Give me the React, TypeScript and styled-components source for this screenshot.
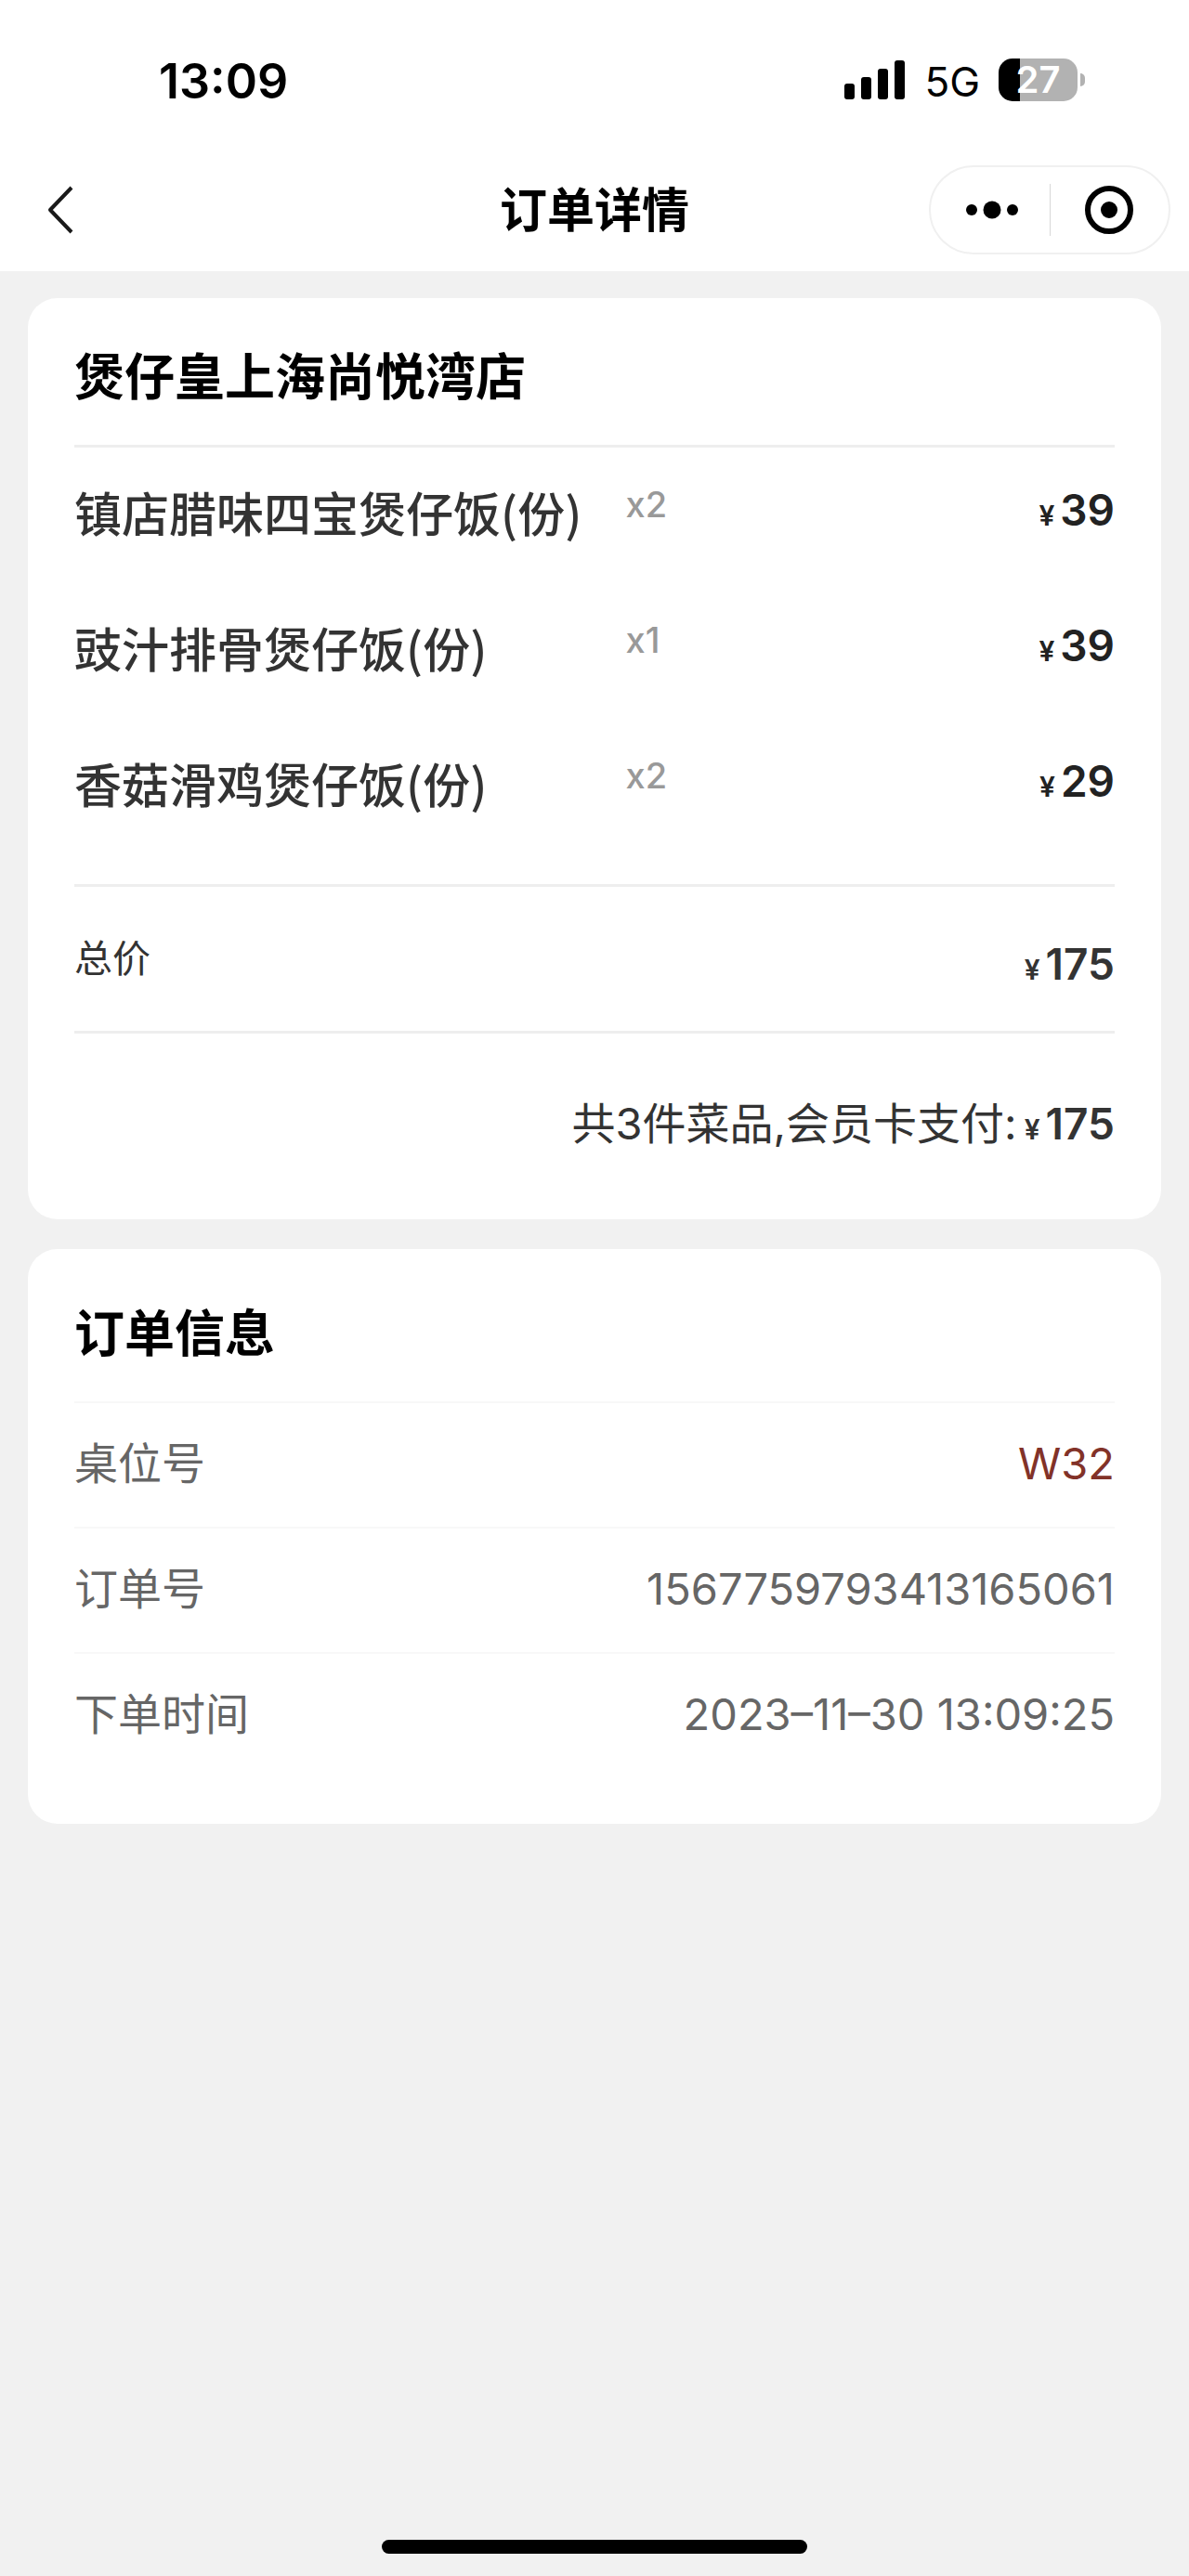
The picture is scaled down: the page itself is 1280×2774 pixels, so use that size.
import React from "react";
import styled, { createGlobalStyle } from "styled-components";

const GlobalStyle = createGlobalStyle`
  *, *::before, *::after { box-sizing: border-box; }
  body {
    margin: 0;
    background: #f1f1f1;
    font-family: Inter, "Noto Sans CJK SC", sans-serif;
    color: #333;
  }
  h1, h2, p, ul, dl, dd { margin: 0; padding: 0; }
  button { border: 0; padding: 0; background: none; color: inherit; font: inherit; cursor: pointer; }
`;

const Page = styled.div`
  display: flex;
  flex-direction: column;
  min-height: 100vh;
`;

const Header = styled.header`
  background: #fff;
`;

const StatusBar = styled.div`
  display: flex;
  align-items: center;
  justify-content: space-between;
  height: 160px;
  padding: 12px 112px 0 171px;
  color: #000;
`;

const Clock = styled.time`
  padding-top: 4px;
  font-size: 52px;
  font-weight: 600;
  line-height: 64px;
`;

const StatusIcons = styled.div`
  display: flex;
  align-items: center;
  gap: 20px;
`;

const Network = styled.span`
  font-size: 44px;
  line-height: 52px;
  padding-top: 4px;
`;

const Battery = styled.div`
  display: flex;
  align-items: center;
  gap: 3px;
`;

const BatteryBody = styled.div`
  display: flex;
  align-items: center;
  justify-content: center;
  width: 85px;
  height: 46px;
  border-radius: 15px;
  background: linear-gradient(to right, #000 27%, #b2b2b2 27%);
  color: #fff;
  font-size: 40px;
  font-weight: 600;
  line-height: 46px;
`;

const BatteryTip = styled.div`
  width: 5px;
  height: 14px;
  border-radius: 0 5px 5px 0;
  background: #b2b2b2;
`;

const NavBar = styled.nav`
  display: grid;
  grid-template-columns: 1fr auto 1fr;
  align-items: center;
  height: 132px;
  padding: 0 20px;
`;

const BackButton = styled.button`
  display: flex;
  align-items: center;
  justify-content: center;
  width: 90px;
  height: 90px;
`;

const PageTitle = styled.h1`
  padding-top: 2px;
  color: #000;
  font-size: 51px;
  font-weight: 700;
  line-height: 72px;
`;

const Capsule = styled.div`
  display: flex;
  align-items: center;
  justify-self: end;
  height: 96px;
  border: 2px solid #f0f0f0;
  border-radius: 48px;
  color: #000;
`;

const CapsuleButton = styled.button`
  display: flex;
  align-items: center;
  justify-content: center;
  width: 128px;
  height: 92px;

  & + & {
    background: linear-gradient(#d8d8d8, #d8d8d8) left center / 1px 56px no-repeat;
  }
`;

const Content = styled.main`
  display: flex;
  flex: 1;
  flex-direction: column;
  gap: 32px;
  padding: 29px 30px;
`;

const Card = styled.section`
  padding: 0 50px;
  border-radius: 32px;
  background: #fff;
`;

const CardTitle = styled.h2<{ $tall?: boolean }>`
  padding: ${(p) => (p.$tall ? "56px 0 36px" : "50px 0 36px")};
  color: #000;
  font-size: 54px;
  font-weight: 700;
  line-height: 72px;
`;

const DishList = styled.ul`
  list-style: none;
  border: solid #eee;
  border-width: 3px 0;

  && { padding-bottom: 32px; }
`;

const Dish = styled.li`
  display: flex;
  align-items: flex-start;
  min-height: 146px;
  padding: 35px 0;
`;

const DishName = styled.span`
  flex: 0 0 53%;
  font-family: "Noto Sans CJK SC", sans-serif;
  font-size: 51px;
  font-weight: 500;
  line-height: 68px;
`;

const Quantity = styled.span`
  flex: 1;
  color: #999;
  font-size: 38px;
  font-weight: 500;
  line-height: 52px;
`;

const PriceText = styled.span<{ $dark?: boolean }>`
  color: ${(p) => (p.$dark ? "#222" : "#333")};
  font-size: 46px;
  font-weight: 600;
  line-height: 64px;
`;

const Currency = styled.small`
  margin-right: 6px;
  font-size: 30px;
  font-weight: 600;
`;

const TotalRow = styled.div`
  display: flex;
  align-items: flex-start;
  justify-content: space-between;
  height: 158px;
  padding-top: 45px;
  border-bottom: 3px solid #eee;

  ${PriceText} { line-height: 76px; }
`;

const TotalLabel = styled.span`
  font-size: 41px;
  line-height: 64px;
`;

const PaidRow = styled.p`
  display: flex;
  align-items: baseline;
  justify-content: flex-end;
  gap: 8px;
  min-height: 200px;
  font-size: 47px;
  line-height: 64px;

  && { padding-top: 65px; }
`;

const InfoList = styled.dl`
  && { padding-bottom: 50px; }
`;

const InfoRow = styled.div`
  display: flex;
  align-items: center;
  justify-content: space-between;
  height: 135px;
  padding-bottom: 4px;
  border-top: 2px solid #f8f8f8;
  color: #666;
  font-size: 47px;
  line-height: 64px;
`;

const InfoValue = styled.dd<{ $accent?: boolean }>`
  color: ${(p) => (p.$accent ? "#823228" : "inherit")};
`;

const HomeArea = styled.footer`
  display: flex;
  justify-content: center;
  padding: 0 32% 24px;
`;

const HomeIndicator = styled.div`
  flex: 0 1 458px;
  height: 15px;
  border-radius: 8px;
  background: #000;
`;

const dishes = [
  { name: "镇店腊味四宝煲仔饭(份)", count: 2, price: 39 },
  { name: "豉汁排骨煲仔饭(份)", count: 1, price: 39 },
  { name: "香菇滑鸡煲仔饭(份)", count: 2, price: 29 },
];

const info = [
  { label: "桌位号", value: "W32", accent: true },
  { label: "订单号", value: "1567759793413165061" },
  { label: "下单时间", value: "2023–11–30 13:09:25" },
];

function Price({ value, dark }: { value: number; dark?: boolean }) {
  return (
    <PriceText $dark={dark}>
      <Currency>¥</Currency>
      {value}
    </PriceText>
  );
}

function SignalIcon() {
  return (
    <svg width="66" height="42" viewBox="0 0 66 42" aria-hidden="true">
      <rect x="0" y="25" width="11" height="17" rx="3" />
      <rect x="18" y="18" width="11" height="24" rx="3" />
      <rect x="36" y="9" width="11" height="33" rx="3" />
      <rect x="54" y="0" width="11" height="42" rx="3" />
    </svg>
  );
}

export default function App() {
  return (
    <Page>
      <GlobalStyle />
      <Header>
        <StatusBar>
          <Clock>13:09</Clock>
          <StatusIcons>
            <SignalIcon />
            <Network>5G</Network>
            <Battery>
              <BatteryBody>27</BatteryBody>
              <BatteryTip />
            </Battery>
          </StatusIcons>
        </StatusBar>
        <NavBar>
          <BackButton type="button" aria-label="返回">
            <svg width="28" height="52" viewBox="0 0 28 52" fill="none" stroke="#1a1a1a" strokeWidth="4">
              <path d="M26 2 3 26l23 24" strokeLinejoin="round" />
            </svg>
          </BackButton>
          <PageTitle>订单详情</PageTitle>
          <Capsule>
            <CapsuleButton type="button" aria-label="更多">
              <svg width="60" height="20" viewBox="0 0 60 20">
                <circle cx="10" cy="10" r="6" />
                <circle cx="32" cy="10" r="9.5" />
                <circle cx="54" cy="10" r="6" />
              </svg>
            </CapsuleButton>
            <CapsuleButton type="button" aria-label="关闭">
              <svg width="52" height="52" viewBox="0 0 52 52">
                <circle cx="26" cy="26" r="23" fill="none" stroke="currentColor" strokeWidth="6" />
                <circle cx="26" cy="26" r="9" />
              </svg>
            </CapsuleButton>
          </Capsule>
        </NavBar>
      </Header>

      <Content>
        <Card>
          <CardTitle>煲仔皇上海尚悦湾店</CardTitle>
          <DishList>
            {dishes.map((dish) => (
              <Dish key={dish.name}>
                <DishName>{dish.name}</DishName>
                <Quantity>x{dish.count}</Quantity>
                <Price value={dish.price} dark />
              </Dish>
            ))}
          </DishList>
          <TotalRow>
            <TotalLabel>总价</TotalLabel>
            <Price value={175} />
          </TotalRow>
          <PaidRow>
            共3件菜品,会员卡支付:
            <Price value={175} />
          </PaidRow>
        </Card>

        <Card>
          <CardTitle $tall>订单信息</CardTitle>
          <InfoList>
            {info.map((row) => (
              <InfoRow key={row.label}>
                <dt>{row.label}</dt>
                <InfoValue $accent={row.accent}>{row.value}</InfoValue>
              </InfoRow>
            ))}
          </InfoList>
        </Card>
      </Content>

      <HomeArea>
        <HomeIndicator />
      </HomeArea>
    </Page>
  );
}
